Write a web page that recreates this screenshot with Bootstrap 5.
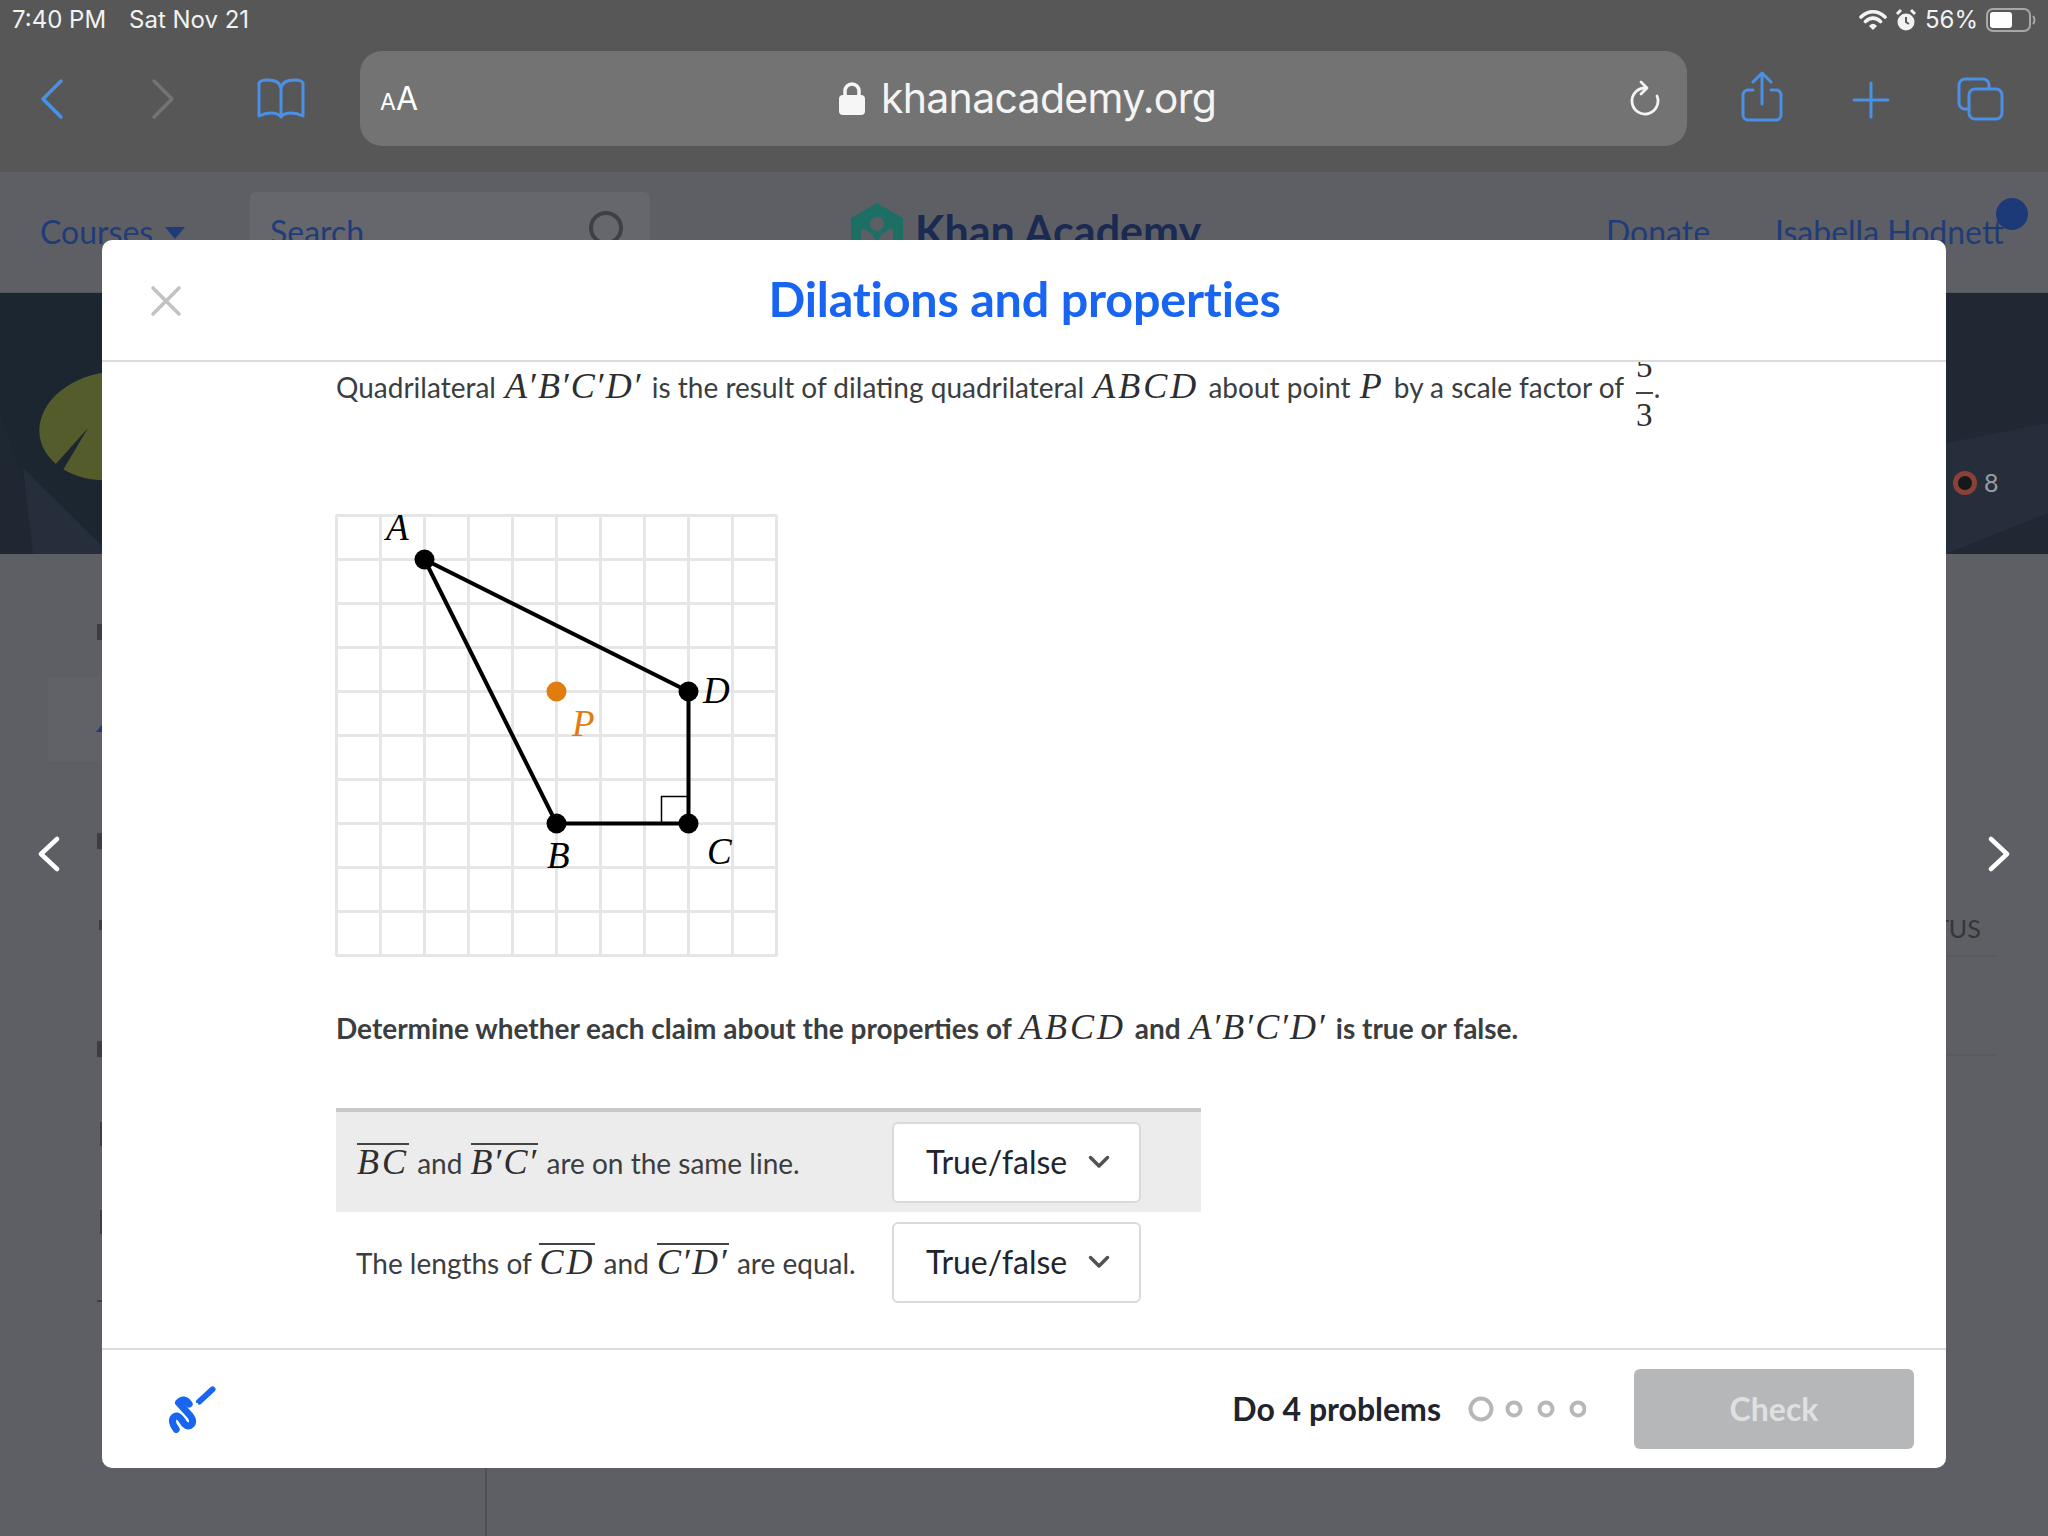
<!DOCTYPE html>
<html lang="en">
<head>
  <meta charset="UTF-8" />
  <meta name="viewport" content="width=device-width, initial-scale=1.0"/>
  <title>Dilations and properties</title>
  <link href="https://cdn.jsdelivr.net/npm/bootstrap@5.3.3/dist/css/bootstrap.min.css" rel="stylesheet">
  <style>
    html, body { height: 1536px; overflow: hidden; }
    body { background: #5e5f65; font-family: "Lato", "Liberation Sans", sans-serif; position: relative; }

    /* safari chrome */
    .safari { height: 172px; background: #575757; color: #fff; font-family: "Inter", "Liberation Sans", sans-serif; }
    .status-row { height: 40px; padding: 0 12px 0 12px; font-size: 24px; color: #f2f2f2; }
    .status-row .clock { width: 117px; }
    .url-pill { width: 1327px; height: 95px; background: #737373; border-radius: 22px; padding: 0 26px 0 20px; position: absolute; left: 360px; top: 51px; }
    .url-text { font-size: 41px; letter-spacing: -.7px; color: #f4f4f4; margin-left: 421px; }
    .aa-small { font-size: 23px; }
    .aa-big { font-size: 32px; }
    .tool-ico { position: absolute; fill: none; stroke: #4a90e6; stroke-width: 3; stroke-linecap: round; stroke-linejoin: round; }

    /* page behind the dialog */
    .kh-nav { height: 121px; background: #5e5f65; border-bottom: 1px solid #55565c; font-size: 32px; color: #1f3c78; position: relative; overflow: hidden; }
    .kh-nav span { position: absolute; top: 36px; }
    .search-box { position: absolute; left: 250px; top: 20px; width: 400px; height: 80px; background: #66676d; border-radius: 6px; }
    .kh-brand { font-weight: 700; color: #1b2a52; font-size: 43px; }
    .kh-dot { position: absolute; left: 1996px; top: 26px; width: 32px; height: 32px; border-radius: 50%; background: #1c3a78; }
    .kh-banner { height: 261px; background: #1d2733; display: block; }
    .kh-under { display: block; }

    /* dialog */
    .dlg-layer { position: absolute; left: 0; right: 0; top: 240px; height: 1228px; }
    .dlg-side { width: 102px; }
    .dlg-box { width: 1844px; height: 1228px; border: 0; border-radius: 10px; overflow: hidden; background: #fff; }
    .dlg-head { height: 122px; padding: 0; border-bottom: 2px solid #dcdcdc; position: relative; }
    .dlg-title { color: #1865f2; font-weight: 700; font-size: 48.500px; line-height: 1; margin: 0 0 0 1px; letter-spacing: -.2px; padding-bottom: 3px; }
    .dlg-close { position: absolute; left: 48px; top: 45px; }
    .dlg-body { height: 986px; padding: 0 0 0 234px; overflow: hidden; color: #3b3e40; font-size: 28px; flex: none; }
    .lead-line { margin: -13px 0 0; height: 166px; line-height: 40px; white-space: nowrap; }
    .mth { font-family: "Liberation Serif", serif; font-style: italic; font-size: 36px; letter-spacing: 3px; color: #2c2e30; margin: 0 2px; }
    .pr { letter-spacing: 0; font-style: normal; }
    .frac { display: inline-flex; flex-direction: column; align-items: center; vertical-align: middle; font-family: "Liberation Serif", serif; font-size: 33px; line-height: 34px; margin: 0 1px 0 5px; color: #2c2e30; }
    .frac i { font-style: normal; }
    .frac .bar { border-top: 2px solid #444; width: 17px; margin: 9px 0 4px; }
    .graph-wrap { height: 442px; }
    #graph { overflow: visible; display: block; }
    .ask-line { margin: 50px 0 0; height: 101px; line-height: 40px; font-weight: 700; }
    .ask-line .mth { font-weight: 400; margin: 0 2px; }
    .claim-list { width: 865px; }
    .claim-row { height: 100px; padding-left: 20px; }
    .claim-row.shaded { height: 104px; background: #ececec; border-top: 4px solid #c9c9c9; }
    .claim-text { width: 536px; white-space: nowrap; padding-top: 2px; }
    .ovl { border-top: 2px solid #444; padding-top: 1px; display: inline-block; line-height: 32px; margin: 0 1px; }
    .tf-select { width: 249px; height: 81px; font-family: "Lato", sans-serif; font-size: 32px; color: #21242c; border: 2px solid #dadadb; border-radius: 6px; padding: 0 0 0 32px; background-color: #fff; background-image: url("data:image/svg+xml,%3csvg xmlns='http://www.w3.org/2000/svg' viewBox='0 0 22 14'%3e%3cpath fill='none' stroke='%23505356' stroke-width='3.500' stroke-linecap='round' stroke-linejoin='round' d='M2.500 2.500L11 11l8.500-8.500'/%3e%3c/svg%3e"); background-size: 22px 14px; background-position: right 29px center; }
    .dlg-foot { height: 120px; flex: none; padding: 0 32px 0 63px; border-top: 2px solid #dcdcdc; justify-content: space-between; flex-wrap: nowrap; }
    .do-count { font-size: 32px; font-weight: 700; color: #21242c; margin: 0; }
    .chk-btn { width: 280px; height: 80px; background: #b6b7b9; border: 0; border-radius: 6px; font-size: 32px; font-weight: 700; color: #dfe0e1; }
    .chk-btn:disabled { background: #b6b7b9; color: #dfe0e1; opacity: 1; }
    .prog { margin: 0 48px 0 27px; }
  </style>
</head>
<body>

<div class="safari position-relative">
  <div class="status-row d-flex align-items-center">
    <span class="clock">7:40 PM</span><span>Sat Nov 21</span>
    <span class="ms-auto d-flex align-items-center gap-2">
      <svg width="28" height="24" viewBox="0 0 28 24" fill="none" stroke="#f2f2f2" stroke-width="3.600" stroke-linecap="round"><path d="M2 9c7-7 17-7 24 0M6.500 13.500c4.500-4.500 10.500-4.500 15 0"/><path d="M11 18c2-2 4-2 6 0l-3 3z" fill="#f2f2f2" stroke-width="1.500"/></svg>
      <svg width="22" height="25" viewBox="0 0 22 25"><circle cx="11" cy="14" r="8.500" fill="#f2f2f2"/><path d="M11 9v5l3 2" stroke="#575757" stroke-width="2" fill="none"/><path d="M2 6l4-4M20 6l-4-4" stroke="#f2f2f2" stroke-width="3"/></svg>
      <span>56%</span>
      <svg width="50" height="26" viewBox="0 0 50 26"><rect x="1" y="2" width="43" height="22" rx="6" fill="none" stroke="#a8a8a8" stroke-width="2"/><rect x="4" y="5" width="22" height="16" rx="3" fill="#fff"/><path d="M47 9c2 2 2 6 0 8" stroke="#a8a8a8" stroke-width="2" fill="none"/></svg>
    </span>
  </div>
  <svg class="tool-ico" style="left:38px;top:78px" width="28" height="42" viewBox="0 0 28 42"><path d="M23 3L5 21l18 18" stroke-width="3.500"/></svg>
  <svg class="tool-ico" style="left:149px;top:78px;stroke:#747474" width="28" height="42" viewBox="0 0 28 42"><path d="M5 3l18 18L5 39" stroke-width="3.500"/></svg>
  <svg class="tool-ico" style="left:256px;top:77px" width="50" height="44" viewBox="0 0 50 44"><path d="M25 11C24 5 18 3 11 3 7 3 4 4 3 6v33c4-2 8-3 12-3 5 0 8 1 10 4 2-3 5-4 10-4 4 0 8 1 12 3V6c-1-2-4-3-8-3-7 0-13 2-14 8z M25 11v29"/></svg>
  <div class="url-pill d-flex align-items-center">
    <span><span class="aa-small">A</span><span class="aa-big">A</span></span>
    <span class="url-text d-flex align-items-center gap-3 me-auto">
      <svg width="26" height="33" viewBox="0 0 26 33"><path d="M6 14V9a7 7 0 0 1 14 0v5" fill="none" stroke="#f6f6f6" stroke-width="3.500"/><rect y="13" width="26" height="20" rx="4" fill="#f6f6f6"/></svg>
      khanacademy.org
    </span>
    <svg width="32" height="38" viewBox="0 0 32 38" fill="none" stroke="#f4f4f4" stroke-width="2.800" stroke-linecap="round"><path d="M16 8a13 13 0 1 0 12 8"/><path d="M12 2l6 6-6 6" stroke-linejoin="round"/></svg>
  </div>
  <svg class="tool-ico" style="left:1740px;top:71px" width="44" height="52" viewBox="0 0 44 52"><path d="M13 19H8a5 5 0 0 0-5 5v20a5 5 0 0 0 5 5h28a5 5 0 0 0 5-5V24a5 5 0 0 0-5-5h-5M22 33V3M13 11l9-9 9 9"/></svg>
  <svg class="tool-ico" style="left:1852px;top:81px" width="38" height="38" viewBox="0 0 38 38"><path d="M19 2v34M2 19h34"/></svg>
  <svg class="tool-ico" style="left:1956px;top:76px" width="50" height="46" viewBox="0 0 50 46"><path d="M13 33H9a6 6 0 0 1-6-6V9a6 6 0 0 1 6-6h18a6 6 0 0 1 6 6v3"/><rect x="13" y="13" width="33" height="30" rx="6"/></svg>
</div>

<div class="kh-nav">
  <span style="left:40px">Courses</span>
  <svg class="position-absolute" style="left:165px;top:55px" width="20" height="12"><path d="M0 0h20L10 12z" fill="#1f3c78"/></svg>
  <div class="search-box"></div>
  <span style="left:270px">Search</span>
  <svg class="position-absolute" style="left:588px;top:38px" width="36" height="36" fill="none" stroke="#3f4045" stroke-width="4"><circle cx="18" cy="18" r="15"/></svg>
  <svg class="position-absolute" style="left:850px;top:31px" width="54" height="62" viewBox="0 0 54 62"><path d="M27 0l26 15v32L27 62 1 47V15z" fill="#1d6f66"/><circle cx="27" cy="21" r="7" fill="#5e5f65"/><path d="M11 26c9 1 14 7 16 16 2-9 7-15 16-16v17L27 52 11 43z" fill="#5e5f65"/></svg>
  <span class="kh-brand" style="left:915px;top:27px">Khan Academy</span>
  <span style="left:1606px">Donate</span>
  <span style="left:1775px">Isabella Hodnett</span>
  <div class="kh-dot"></div>
</div>

<svg class="kh-banner" width="2048" height="261" viewBox="0 0 2048 261">
  <rect width="2048" height="261" fill="#1b2631"/>
  <polygon points="1500,0 2048,0 2048,261 1500,261" fill="#212733"/>
  <polygon points="0,120 24,190 78,261 0,261" fill="#1f2733"/>
  <polygon points="23,175 110,261 33,261" fill="#272e3b"/>
  <polygon points="1946,150 2048,130 2048,220 1946,261" fill="#272e3b"/>
  <ellipse cx="112" cy="133" rx="73" ry="54" fill="#545c2c" transform="rotate(-8 112 133)"/>
  <polygon points="45,183 88,135 60,182" fill="#1b2631"/>
  <circle cx="1965" cy="190" r="12" fill="#8a4238"/>
  <circle cx="1965" cy="190" r="7" fill="#15181d"/>
  <text x="1984" y="199" font-family="Lato, sans-serif" font-size="25" fill="#9a9ca1">8</text>
</svg>

<svg class="kh-under" width="2048" height="982" viewBox="0 554 2048 982">
  <rect x="48" y="677" width="60" height="84" fill="#616268"/>
  <g fill="#3d3e43">
    <rect x="97" y="624" width="6" height="16"/>
    <rect x="97" y="833" width="6" height="16"/>
    <rect x="99" y="920" width="6" height="10"/>
    <rect x="97" y="1041" width="6" height="16"/>
    <rect x="100" y="1122" width="6" height="24"/>
    <rect x="100" y="1210" width="6" height="24"/>
    <rect x="97" y="1300" width="6" height="2"/>
  </g>
  <path d="M96 732l8-10v10z" fill="#1f3c78"/>
  <text x="1934" y="938" font-family="Lato, sans-serif" font-size="25" fill="#35363b">TUS</text>
  <path d="M1946 956h50M1946 1055h50" stroke="#55565b" stroke-width="1"/>
  <path d="M486 1468v68" stroke="#4f5055" stroke-width="2"/>
</svg>

<div class="dlg-layer d-flex align-items-stretch">
  <div class="dlg-side d-flex align-items-center justify-content-center">
    <svg class="me-1" width="24" height="36" viewBox="0 0 24 36" fill="none" stroke="#fff" stroke-width="4.500" stroke-linecap="round" stroke-linejoin="round"><path d="M20 3L4 18l16 15"/></svg>
  </div>
  <div class="modal-content dlg-box d-flex flex-column">
    <div class="modal-header dlg-head justify-content-center">
      <svg class="dlg-close" width="32" height="32" viewBox="0 0 32 32" stroke="#c1c2c4" stroke-width="3.600" stroke-linecap="round"><path d="M3 3l26 26M29 3L3 29"/></svg>
      <h1 class="modal-title dlg-title">Dilations and properties</h1>
    </div>
    <div class="modal-body dlg-body">
      <p class="lead-line">Quadrilateral <span class="mth">A<span class="pr">′</span>B<span class="pr">′</span>C<span class="pr">′</span>D<span class="pr">′</span></span> is the result of dilating quadrilateral <span class="mth">ABCD</span> about point <span class="mth">P</span> by a scale factor of <span class="frac"><i>5</i><i class="bar"></i><i>3</i></span>.</p>
      <div class="graph-wrap">
        <svg id="graph" width="442" height="442" viewBox="0 0 442 442"></svg>
      </div>
      <p class="ask-line">Determine whether each claim about the properties of <span class="mth">ABCD</span> and <span class="mth">A<span class="pr">′</span>B<span class="pr">′</span>C<span class="pr">′</span>D<span class="pr">′</span></span> is true or false.</p>
      <div class="claim-list">
        <div class="claim-row shaded d-flex align-items-center">
          <div class="claim-text"><span class="mth ovl">BC</span> and <span class="mth ovl">B<span class="pr">′</span>C<span class="pr">′</span></span> are on the same line.</div>
          <select class="form-select tf-select"><option>True/false</option></select>
        </div>
        <div class="claim-row d-flex align-items-center">
          <div class="claim-text">The lengths of <span class="mth ovl">CD</span> and <span class="mth ovl">C<span class="pr">′</span>D<span class="pr">′</span></span> are equal.</div>
          <select class="form-select tf-select"><option>True/false</option></select>
        </div>
      </div>
    </div>
    <div class="modal-footer dlg-foot d-flex align-items-center">
      <svg class="m-0" width="57" height="50" viewBox="200 130 170 150" fill="none" stroke="#1865f2" stroke-width="21" stroke-linecap="round" stroke-linejoin="round">
        <path d="M233 266Q214 240 228 228 238 222 248 236L258 250Q270 262 280 250 286 240 276 226L240 186Q256 168 272 190"/>
        <path d="M302 183L342 146" stroke-width="18"/>
        <circle cx="296" cy="190" r="3" fill="#fff" stroke="none"/>
      </svg>
      <div class="d-flex align-items-center m-0">
        <p class="do-count">Do 4 problems</p>
        <svg class="prog" width="118" height="28" viewBox="0 0 118 28" fill="none" stroke="#b6b7b9" stroke-width="4">
          <circle cx="13" cy="14" r="10.500"/><circle cx="46" cy="14" r="6.500"/><circle cx="78" cy="14" r="6.500"/><circle cx="110" cy="14" r="6.500"/>
        </svg>
        <button class="btn chk-btn" disabled>Check</button>
      </div>
    </div>
  </div>
  <div class="dlg-side d-flex align-items-center justify-content-center">
    <svg class="ms-1" width="24" height="36" viewBox="0 0 24 36" fill="none" stroke="#fff" stroke-width="4.500" stroke-linecap="round" stroke-linejoin="round"><path d="M4 3l16 15L4 33"/></svg>
  </div>
</div>

<script>
  // coordinate plane: 10 cells of 44px
  const svg = document.getElementById('graph');
  const cell = 44, off = 0.5;
  const px = n => n * cell + off;
  let out = '';
  for (let i = 0; i <= 10; i++) {
    out += `<path d="M${px(i)} 0V441M0 ${px(i)}H441" stroke="#e6e6e6" stroke-width="3"/>`;
  }
  const A = [2, 1], B = [5, 7], C = [8, 7], D = [8, 4], P = [5, 4];
  const pts = [A, B, C, D].map(p => px(p[0]) + ',' + px(p[1])).join(' ');
  out += `<polygon points="${pts}" fill="none" stroke="#000" stroke-width="4"/>`;
  out += `<path d="M${px(8) - 27} ${px(7)}V${px(7) - 27}H${px(8)}" fill="none" stroke="#000" stroke-width="1.500"/>`;
  [A, B, C, D].forEach(p => { out += `<circle cx="${px(p[0])}" cy="${px(p[1])}" r="10" fill="#000"/>`; });
  out += `<circle cx="${px(P[0])}" cy="${px(P[1])}" r="10" fill="#e07d10"/>`;
  const labels = [['A', 50, 25, '#000'], ['B', 211, 353, '#000'], ['C', 371, 349, '#000'], ['D', 367, 188, '#000'], ['P', 236, 221, '#e07d10']];
  labels.forEach(l => {
    out += `<text x="${l[1]}" y="${l[2]}" font-family="Liberation Serif, serif" font-style="italic" font-size="37" fill="${l[3]}">${l[0]}</text>`;
  });
  svg.innerHTML = out;
</script>

</body>
</html>
